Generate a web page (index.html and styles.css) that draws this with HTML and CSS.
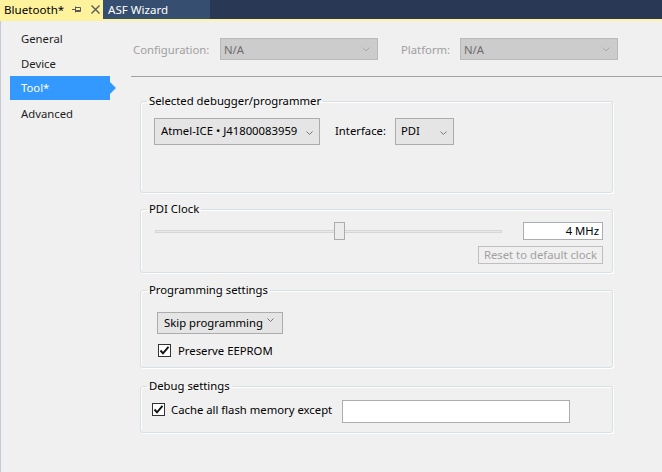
FILE: index.html
```html
<!DOCTYPE html>
<html>
<head>
<meta charset="utf-8">
<link rel="stylesheet" href="styles.css">
</head>
<body>
<div class="tabbar">
  <div class="tab tab-active">
    <span class="tab-title">Bluetooth*</span>
    <svg class="tab-pin" width="10" height="9" viewBox="0 0 10 9"><path d="M0 4.5H3.5M3.5 1.5V7.5M3.5 2.5H8.5V6.5H3.5M3.5 5.5H8.5" fill="none" stroke="#595959" stroke-width="1"/></svg>
    <svg class="tab-close" width="9" height="9" viewBox="0 0 9 9"><path d="M0.5 0.5L8.5 8.5M8.5 0.5L0.5 8.5" stroke="#5a5a5a" stroke-width="1.4"/></svg>
  </div>
  <div class="tab tab-other">ASF Wizard</div>
</div>
<div class="tabline"></div>
<div class="page">
  <nav class="sidebar">
    <div class="nav-item">General</div>
    <div class="nav-item">Device</div>
    <div class="nav-item nav-selected">Tool*</div>
    <div class="nav-item">Advanced</div>
  </nav>
  <main class="content">
    <div class="config-row">
      <span class="cfg-label cfg-label-config">Configuration:</span>
      <div class="combo combo-disabled combo-config"><span>N/A</span><svg class="chev" width="8" height="5" viewBox="0 0 8 5"><path d="M0.5 0.5L4 4L7.5 0.5" fill="none" stroke="#a8a8a8"/></svg></div>
      <span class="cfg-label cfg-label-platform">Platform:</span>
      <div class="combo combo-disabled combo-config"><span>N/A</span><svg class="chev" width="8" height="5" viewBox="0 0 8 5"><path d="M0.5 0.5L4 4L7.5 0.5" fill="none" stroke="#a8a8a8"/></svg></div>
    </div>
    <div class="separator"></div>

    <div class="groups">
      <fieldset class="group">
        <legend>Selected debugger/programmer</legend>
        <div class="gbody gbody-debugger">
          <div class="combo combo-tall combo-tool"><span>Atmel-ICE • J41800083959</span><svg class="chev" width="7" height="4" viewBox="0 0 7 4"><path d="M0.5 0.5L3.5 3.5L6.5 0.5" fill="none" stroke="#777"/></svg></div>
          <span class="iface-label">Interface:</span>
          <div class="combo combo-tall combo-iface"><span>PDI</span><svg class="chev" width="7" height="4" viewBox="0 0 7 4"><path d="M0.5 0.5L3.5 3.5L6.5 0.5" fill="none" stroke="#777"/></svg></div>
        </div>
      </fieldset>

      <fieldset class="group">
        <legend>PDI Clock</legend>
        <div class="gbody gbody-clock">
          <div class="clock-row">
            <div class="slider">
              <div class="slider-track"></div>
              <div class="slider-thumb"></div>
            </div>
            <div class="textbox textbox-mhz">4 MHz</div>
          </div>
          <div class="clock-row clock-row-btn">
            <div class="btn-disabled">Reset to default clock</div>
          </div>
        </div>
      </fieldset>

      <fieldset class="group group-prog">
        <legend>Programming settings</legend>
        <div class="gbody gbody-prog">
          <div class="combo combo-skip"><span>Skip programming</span><svg class="chev chev-up" width="7" height="4" viewBox="0 0 7 4"><path d="M0.5 0.5L3.5 3.5L6.5 0.5" fill="none" stroke="#777"/></svg></div>
          <label class="check-row check-row-eeprom">
            <span class="checkbox"><svg width="11" height="11" viewBox="0 0 11 11"><path d="M1.5 5.5L4 8.3L9.5 1.8" fill="none" stroke="#111" stroke-width="1.9"/></svg></span>
            <span>Preserve EEPROM</span>
          </label>
        </div>
      </fieldset>

      <fieldset class="group group-debug">
        <legend>Debug settings</legend>
        <div class="gbody gbody-debug">
          <label class="check-row check-row-cache">
            <span class="checkbox"><svg width="11" height="11" viewBox="0 0 11 11"><path d="M1.5 5.5L4 8.3L9.5 1.8" fill="none" stroke="#111" stroke-width="1.9"/></svg></span>
            <span>Cache all flash memory except</span>
          </label>
          <div class="textbox textbox-except"></div>
        </div>
      </fieldset>
    </div>
  </main>
</div>
</body>
</html>
```

FILE: styles.css
```css
* { box-sizing: border-box; }
html, body {
  margin: 0;
  padding: 0;
  background: #f0f0f0;
  font-family: "Noto Sans", "Segoe UI", sans-serif;
  font-size: 11.3px;
  color: #1e1e1e;
  width: 662px;
  height: 472px;
  overflow: hidden;
}

/* tab bar */
.tabbar {
  display: flex;
  height: 19px;
  background: #293955;
}
.tab {
  display: flex;
  align-items: center;
  height: 19px;
  line-height: 19px;
  font-size: 11.6px;
}
.tab-active {
  background: #fff29d;
  color: #000;
  width: 103px;
  padding-left: 4px;
}
.tab-title { width: 68px; }
.tab-close { margin-left: 9px; }
.tab-other {
  background: #364e6f;
  color: #fff;
  width: 107px;
  padding-left: 5px;
}
.tabline {
  height: 2px;
  background: #fff29d;
}

/* page body */
.page {
  display: flex;
  height: 451px;
  border-left: 1px solid #c5cad6;
}
.sidebar {
  width: 130px;
  padding-top: 5px;
  flex: none;
}
.nav-item {
  position: relative;
  height: 25px;
  line-height: 25px;
  margin-left: 9px;
  width: 100px;
  padding-left: 11px;
  color: #1e1e1e;
}
.nav-selected {
  background: #3399ff;
  color: #fff;
  height: 24px;
  line-height: 24px;
  margin-bottom: 1px;
}
.nav-selected::after {
  content: "";
  position: absolute;
  left: 100%;
  top: 6px;
  border-left: 6px solid #3399ff;
  border-top: 6px solid transparent;
  border-bottom: 6px solid transparent;
}

.content {
  flex: 1;
  padding-top: 17px;
}
.config-row {
  display: flex;
  align-items: center;
  height: 22px;
  padding-left: 2px;
}
.cfg-label {
  color: #a0a0a0;
}
.cfg-label-config { width: 87px; }
.cfg-label-platform { width: 59px; margin-left: 23px; }

.combo {
  position: relative;
  display: flex;
  align-items: center;
  border: 1px solid #acacac;
  background: #e5e5e5;
  padding-left: 6px;
  color: #000;
  white-space: nowrap;
}
.combo .chev {
  position: absolute;
  right: 7px;
  top: 50%;
  margin-top: -2px;
}
.combo-disabled {
  background: #cccccc;
  border-color: #b9b9b9;
  color: #6d6d6d;
  padding-left: 3px;
}
.combo-config {
  width: 158px;
  height: 22px;
}
.combo-tall {
  height: 27px;
  align-items: flex-start;
  padding-top: 3px;
  line-height: 17px;
}
.combo-tall .chev { top: 12px; margin-top: 0; right: 6px; }
.combo-tool { width: 166px; }
.combo-iface { width: 59px; padding-left: 5px; }
.iface-label {
  width: 60px;
  margin-left: 15px;
  padding-top: 5px;
  color: #000;
}

.separator {
  height: 1px;
  background: #a0a0a0;
  margin-top: 16px;
}

/* groups */
.groups {
  margin-top: 16px;
  margin-left: 9px;
  display: flex;
  flex-direction: column;
  gap: 8px;
}
.group {
  width: 473px;
  margin: 0;
  padding: 0;
  border: 1px solid #d5dfe5;
  border-radius: 3px;
  box-shadow: inset 1px 1px 0 #fff, 1px 1px 0 #fff;
  min-width: 0;
}
.group-prog { margin-top: 1px; }
.group-debug { margin-top: 2px; }
.group legend {
  margin-left: 6px;
  padding: 0 2px;
  line-height: 16px;
  height: 16px;
  color: #000;
}
.gbody {
  padding-right: 9px;
}
.gbody-debugger {
  height: 83px;
  padding-top: 9px;
  padding-left: 13px;
  display: flex;
  align-items: flex-start;
}
.gbody-clock {
  height: 55px;
  padding-top: 5px;
  padding-left: 14px;
}
.clock-row {
  display: flex;
  align-items: center;
  justify-content: space-between;
  height: 18px;
}
.clock-row-btn {
  justify-content: flex-end;
  margin-top: 6px;
}
.slider {
  position: relative;
  width: 347px;
  height: 18px;
}
.slider-track {
  position: absolute;
  left: 0;
  right: 0;
  top: 8px;
  height: 3px;
  background: #e7eaea;
  border: 1px solid #d6d6d6;
}
.slider-thumb {
  position: absolute;
  left: 179px;
  top: 0;
  width: 11px;
  height: 18px;
  background: #ececec;
  border: 1px solid #acacac;
}
.textbox {
  background: #fff;
  border: 1px solid #abadb3;
  color: #000;
}
.textbox-mhz {
  width: 80px;
  height: 18px;
  line-height: 16px;
  text-align: right;
  padding-right: 3px;
}
.btn-disabled {
  width: 125px;
  height: 18px;
  line-height: 16px;
  text-align: center;
  border: 1px solid #bfbfbf;
  color: #a0a0a0;
  background: #f0f0f0;
}

.gbody-prog {
  height: 69px;
  padding-top: 14px;
  padding-left: 16px;
}
.combo-skip {
  width: 126px;
  height: 22px;
  line-height: 20px;
}
.combo-skip .chev-up { margin-top: -5px; right: 8px; }
.check-row {
  display: flex;
  align-items: center;
  color: #000;
  white-space: nowrap;
}
.check-row-eeprom {
  margin-top: 10px;
  margin-left: 1px;
  gap: 7px;
  height: 13px;
}
.checkbox {
  width: 13px;
  height: 13px;
  border: 1px solid #333;
  background: #fff;
  display: flex;
  align-items: center;
  justify-content: center;
  flex: none;
}
.gbody-debug {
  height: 38px;
  padding-top: 6px;
  padding-left: 11px;
  display: flex;
  align-items: flex-start;
}
.check-row-cache {
  gap: 6px;
  height: 13px;
  margin-top: 3px;
  width: 190px;
}
.textbox-except {
  width: 228px;
  height: 23px;
}
```
